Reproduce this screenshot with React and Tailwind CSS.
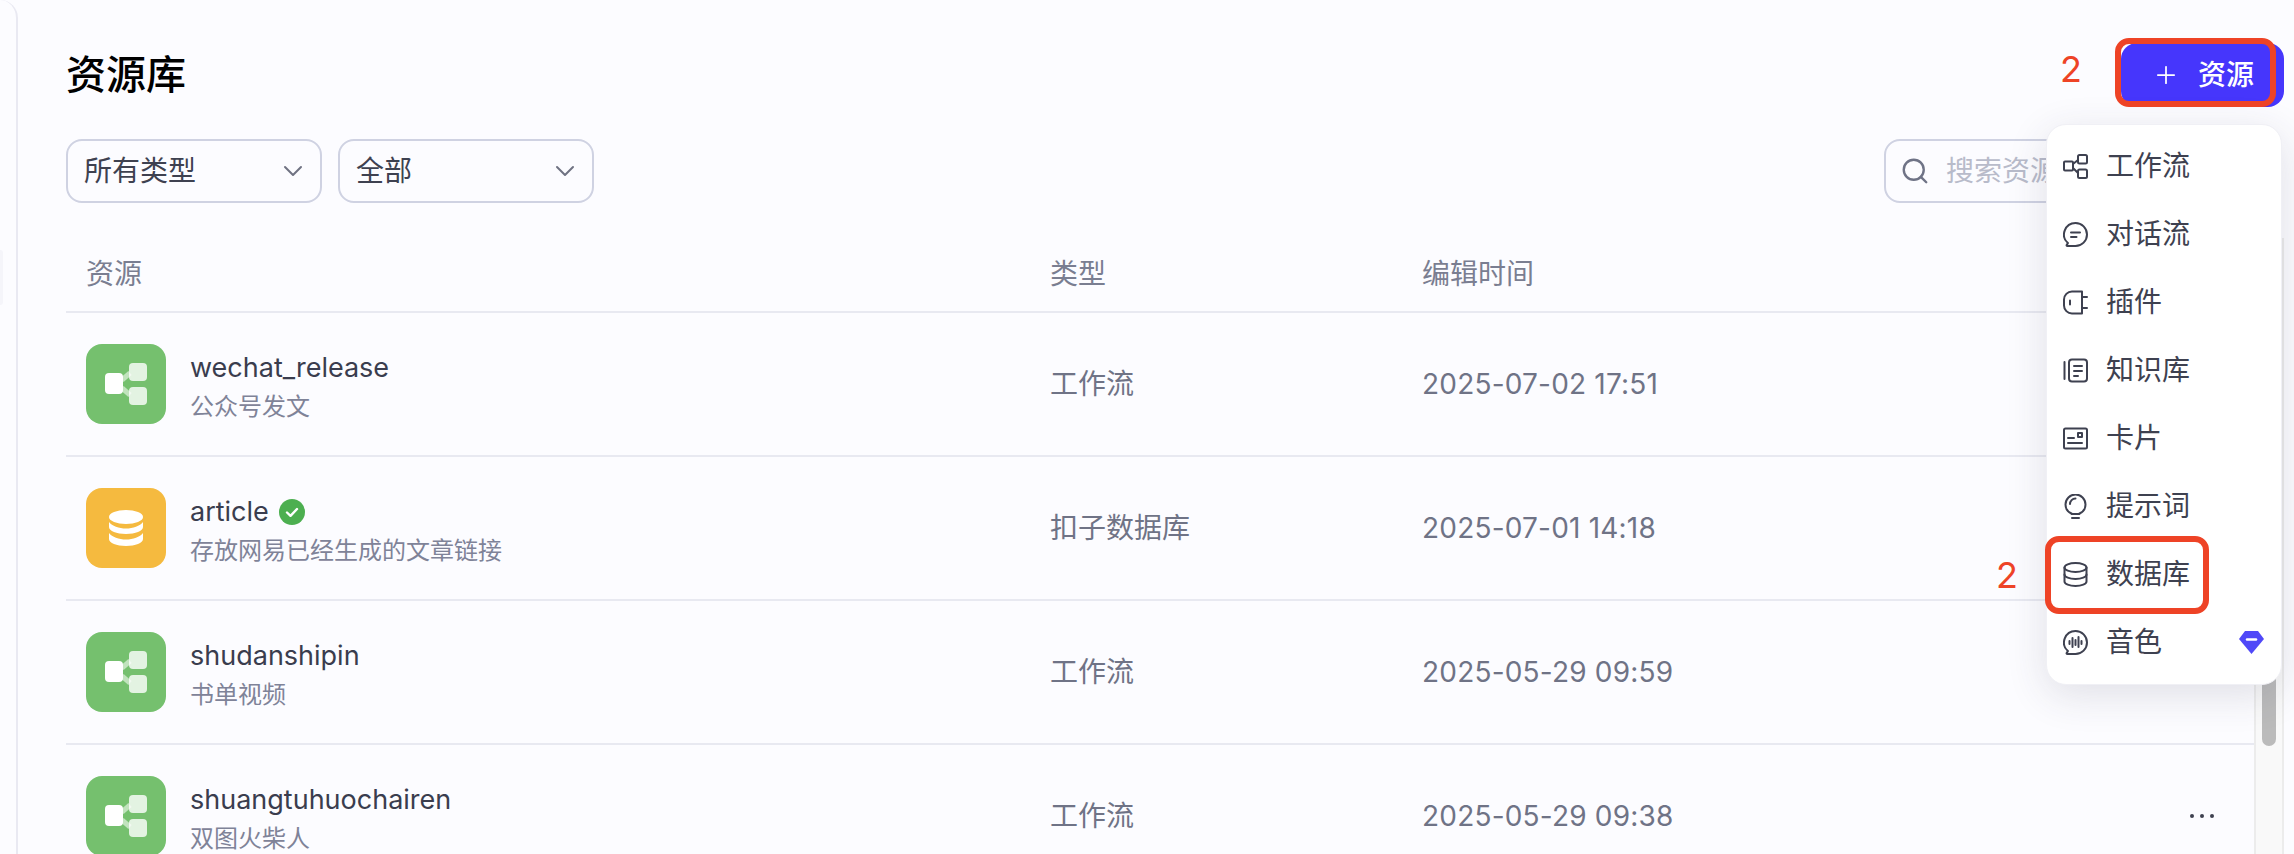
import React from "react";
import { ChevronDown, Plus, Search } from "lucide-react";

const resources = [
  { name: "wechat_release", desc: "公众号发文", type: "工作流", time: "2025-07-02 17:51", kind: "flow" },
  { name: "article", desc: "存放网易已经生成的文章链接", type: "扣子数据库", time: "2025-07-01 14:18", kind: "db", verified: true },
  { name: "shudanshipin", desc: "书单视频", type: "工作流", time: "2025-05-29 09:59", kind: "flow" },
  { name: "shuangtuhuochairen", desc: "双图火柴人", type: "工作流", time: "2025-05-29 09:38", kind: "flow" },
];

function MenuIcon({ children }) {
  return (
    <svg
      viewBox="0 0 25 25"
      fill="none"
      stroke="currentColor"
      strokeWidth="2"
      strokeLinecap="round"
      strokeLinejoin="round"
      className="w-[25px] h-[25px] shrink-0 text-[#3e4150]"
    >
      {children}
    </svg>
  );
}

const chatShape = "M12.5 1a11.500 11.500 0 1 1 0 23H4.500q-1.500 0-.6-1.400l1-1.500A11.500 11.500 0 0 1 12.500 1z";

const menuItems = [
  {
    label: "工作流",
    icon: (
      <>
        <rect x="1" y="7.5" width="9" height="9" rx="1" />
        <rect x="15" y="1" width="9" height="8.5" rx="1.5" />
        <rect x="15" y="15.5" width="9" height="8.5" rx="1.5" />
        <path d="M10 10l5-4M10 14l5 5" />
      </>
    ),
  },
  {
    label: "对话流",
    icon: (
      <>
        <path d={chatShape} />
        <path d="M8 10.500h9M8 15h5.500" />
      </>
    ),
  },
  {
    label: "插件",
    icon: (
      <>
        <path d="M19 1.500H9a8 8 0 0 0-8 8v6a8 8 0 0 0 8 8h10z" />
        <path d="M19 7h5M19 18h5M7 10.500v4" />
      </>
    ),
  },
  {
    label: "知识库",
    icon: (
      <>
        <path d="M1.500 4v17" />
        <rect x="6" y="1.5" width="18" height="22" rx="3" />
        <path d="M11 8h8M11 13h8M11 18h4" />
      </>
    ),
  },
  {
    label: "卡片",
    icon: (
      <>
        <rect x="1" y="2.5" width="23" height="20" rx="1.5" />
        <path d="M5 12h6M5 17h14" />
        <rect x="15" y="7" width="4" height="4" />
      </>
    ),
  },
  {
    label: "提示词",
    icon: (
      <>
        <path d="M8.500 19.500c-3.500-1.500-6-5-6-9a10 10 0 0 1 20 0c0 4-2.500 7.500-6 9v.5h-8z" />
        <path d="M9 24h7M7 10a5.500 5.500 0 0 1 5.500-5.500" />
      </>
    ),
  },
  {
    label: "数据库",
    icon: (
      <>
        <ellipse cx="12.5" cy="5.5" rx="11" ry="4.5" />
        <path d="M1.500 5.500v14c0 2.500 4.900 4.500 11 4.500s11-2 11-4.500v-14" />
        <path d="M1.500 12.500c0 2.500 4.900 4.500 11 4.500s11-2 11-4.500" />
      </>
    ),
  },
  {
    label: "音色",
    icon: (
      <>
        <path d={chatShape} />
        <path d="M6.500 11v3M9.500 8v9M12.500 10v5M15.500 7v10M18.500 11v3" />
      </>
    ),
    vip: true,
  },
];

function FlowIcon() {
  return (
    <div className="w-20 h-20 shrink-0 rounded-[16px] bg-[#75c06e]">
      <svg viewBox="0 0 80 80" className="w-20 h-20">
        <path d="M36 36l8-7M36 44l8 7" stroke="#fff" strokeOpacity="0.55" strokeWidth="5" />
        <rect x="43" y="19" width="18" height="18" rx="4" fill="#fff" fillOpacity="0.8" />
        <rect x="43" y="43" width="18" height="18" rx="4" fill="#fff" fillOpacity="0.8" />
        <rect x="19" y="29" width="18" height="21" rx="4" fill="#fff" />
      </svg>
    </div>
  );
}

function DbIcon() {
  return (
    <div className="w-20 h-20 shrink-0 rounded-[16px] bg-[#f5ba3f]">
      <svg viewBox="0 0 80 80" className="w-20 h-20" fill="#fff">
        <ellipse cx="40" cy="29" rx="17" ry="7" />
        <path d="M23 34v5c0 3.900 7.600 7 17 7s17-3.100 17-7v-5c-3 4-10 6.500-17 6.500s-14-2.500-17-6.500z" />
        <path d="M23 45v6c0 3.900 7.600 7 17 7s17-3.100 17-7v-6c-3 4-10 6.500-17 6.500s-14-2.500-17-6.500z" />
      </svg>
    </div>
  );
}

function Select({ label }) {
  return (
    <div className="w-[256px] h-[64px] flex items-center justify-between pl-[16px] pr-[11px] rounded-[16px] border-2 border-[#cfd2e2] text-[28px] text-[#3e4150]">
      <span>{label}</span>
      <ChevronDown className="w-[32px] h-[32px] text-[#6f7282]" strokeWidth={1.5} />
    </div>
  );
}

export default function App() {
  return (
    <div className="relative flex h-[854px] w-full overflow-hidden bg-[#fcfcff] font-[Inter,'Noto_Sans_CJK_SC',sans-serif]">
      {/* collapsed side nav edge */}
      <div className="w-[18px] shrink-0 border-r-2 border-[#e9e9f2] rounded-tr-[24px] pt-[250px]">
        <div className="w-[3px] h-[55px] rounded-r-[4px] bg-[#f5f5fa]" />
      </div>

      <div className="flex-1 min-w-0 flex flex-col pl-12 pr-[10px]">
        <div className="flex items-center justify-between pt-[43px]">
          <h1 className="text-[40px] leading-[64px] font-medium text-black">资源库</h1>
          <button className="flex items-center w-[163px] h-[64px] pl-[31px] gap-[18px] rounded-[16px] bg-[#4636fc] text-white text-[28px] font-medium">
            <Plus className="w-[28px] h-[28px]" strokeWidth={1.5} />
            资源
          </button>
        </div>

        <div className="flex items-center gap-4 mt-[32px]">
          <Select label="所有类型" />
          <Select label="全部" />
          <div className="ml-auto mr-[80px] w-[320px] h-[64px] flex items-center gap-[16px] pl-[14px] rounded-[16px] border-2 border-[#cfd2e2] text-[28px] text-[#b8bbca]">
            <Search className="w-[30px] h-[30px] text-[#6f7386]" strokeWidth={1.9} />
            <span>搜索资源</span>
          </div>
        </div>

        <div className="flex flex-1 min-h-0 mt-[35px]">
          <div className="flex-1 min-w-0 overflow-hidden">
            <div className="grid grid-cols-[964px_372px_1fr] items-center h-[75px] pl-5 pb-[1px] border-b-2 border-[#e8e9f1] text-[28px] text-[#7a7e91]">
              <span>资源</span>
              <span>类型</span>
              <span>编辑时间</span>
            </div>
            {resources.map((r) => (
              <div
                key={r.name}
                className="grid grid-cols-[964px_372px_1fr_auto] items-center h-[144px] shrink-0 pl-5 pr-10 border-b-2 border-[#e8e9f1] text-[#6f7386]"
              >
                <div className="flex items-center gap-6">
                  {r.kind === "flow" ? <FlowIcon /> : <DbIcon />}
                  <div className="flex flex-col pt-[6px]">
                    <div className="flex items-center gap-[10px] text-[27px] leading-[40px] text-[#3a3d4e]">
                      {r.name}
                      {r.verified && (
                        <svg viewBox="0 0 26 26" className="w-[26px] h-[26px]">
                          <circle cx="13" cy="13" r="13" fill="#4caf50" />
                          <path d="M8 13.500l3.500 3.300L18 10" fill="none" stroke="#fff" strokeWidth="2.400" strokeLinecap="round" strokeLinejoin="round" />
                        </svg>
                      )}
                    </div>
                    <div className="text-[24px] leading-[38px] text-[#7f8398]">{r.desc}</div>
                  </div>
                </div>
                <span className="text-[28px]">{r.type}</span>
                <span className="text-[28px] tracking-[0.2px]">{r.time}</span>
                <div className="flex gap-[6px]">
                  <span className="w-1 h-1 rounded-full bg-[#3e4150]" />
                  <span className="w-1 h-1 rounded-full bg-[#3e4150]" />
                  <span className="w-1 h-1 rounded-full bg-[#3e4150]" />
                </div>
              </div>
            ))}
          </div>
          <div className="w-[30px] shrink-0 border-x-2 border-[#ececec] bg-[#f9f9f9] px-[6px]">
            <div className="mt-[340px] h-[168px] rounded-full bg-[#bbbbbb]" />
          </div>
        </div>
      </div>

      {/* dropdown */}
      <div className="absolute left-[2046px] top-[124px] w-[236px] h-[561px] py-[7px] rounded-[20px] bg-white border border-[#f0f0f5] shadow-[0_10px_40px_rgba(50,50,80,0.14)]">
        {menuItems.map((item) => (
          <div key={item.label} className="flex items-center h-[68px] pl-[16px] pr-[17px] gap-[18px] text-[28px] text-[#3e4150]">
            <MenuIcon>{item.icon}</MenuIcon>
            <span>{item.label}</span>
            {item.vip && (
              <svg viewBox="0 0 25 23" className="ml-auto w-[25px] h-[23px]">
                <path d="M6 0h13l6 8-12.500 15L0 8z" fill="#5048f8" />
                <path d="M8 8.500h9" stroke="#fff" strokeWidth="2.500" strokeLinecap="round" />
              </svg>
            )}
          </div>
        ))}
      </div>

      {/* red annotations */}
      <div className="absolute left-[2115px] top-[38px] w-[161px] h-[69px] rounded-[14px] border-[6px] border-[#ee4326]" />
      <div className="absolute left-[2045px] top-[536px] w-[164px] h-[78px] rounded-[14px] border-[6px] border-[#ee4326]" />
      <span className="absolute left-[2060px] top-[47px] text-[36px] leading-[44px] text-[#ee4326]">2</span>
      <span className="absolute left-[1996px] top-[553px] text-[36px] leading-[44px] text-[#ee4326]">2</span>
    </div>
  );
}
